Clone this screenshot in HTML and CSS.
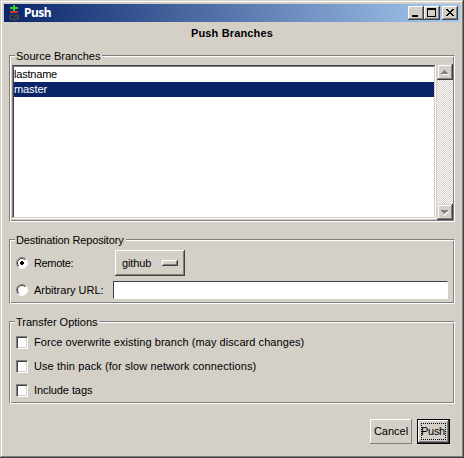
FILE: index.html
```html
<!DOCTYPE html>
<html lang="en">
<head>
<meta charset="utf-8">
<title>Push</title>
<link rel="stylesheet" href="styles.css">
</head>
<body>
<main class="window">
  <header class="titlebar">
    <svg class="app-icon" width="12" height="18" viewBox="0 0 12 18">
      <path fill="#3c3" d="M5 1h2v2h3v2H7v2H5V5H2V3h3z"/>
      <path fill="#c33" d="M2 7h8v2H2z"/>
      <path fill="none" stroke="#444" stroke-width="2" d="M5 11H3.500Q2 11 2 13t1.500 2.500h4.500Q10 15.500 10 13.500V11.500H7V13.500"/>
    </svg>
    <h1 class="title">Push</h1>
    <button class="caption" aria-label="Minimize"><svg width="12" height="10" shape-rendering="crispEdges"><path d="M2 7h6v2H2z"/></svg></button>
    <button class="caption" aria-label="Maximize"><svg width="12" height="10" shape-rendering="crispEdges"><path fill-rule="evenodd" d="M1 0h9v9H1zM2 2v6h7V2z"/></svg></button>
    <button class="caption close" aria-label="Close"><svg width="12" height="10" shape-rendering="crispEdges"><path d="M2 1h2v1h1v1h2V2h1V1h2v1H9v1H8v1H7v1h1v1h1v1h1v1H8V7H7V6H5v1H4v1H2V7h1V6h1V5h1V4H4V3H3V2H2z"/></svg></button>
  </header>
  <h2 class="heading">Push Branches</h2>

  <section class="group branches">
    <h3 class="legend"><span class="t-source">Source Branches</span></h3>
    <div class="list-row">
      <ul class="listbox">
        <li>lastname</li>
        <li class="selected">master</li>
      </ul>
      <div class="scrollbar">
        <div class="arrow"><svg width="12" height="12" shape-rendering="crispEdges"><path fill="#fff" d="M3 8h7v1H3z"/><path fill="#808080" d="M5 4h1v1h1v1h1v1h1v1H2V7h1V6h1V5h1z"/></svg></div>
        <div class="track"></div>
        <div class="arrow"><svg width="12" height="12" shape-rendering="crispEdges"><path fill="#fff" d="M9 5h1v1H9v1H8v1H7v1H6v1H5V8h1V7h1V6h2z"/><path fill="#808080" d="M2 4h7v1H8v1H7v1H6v1H5V7H4V6H3V5H2z"/></svg></div>
      </div>
    </div>
  </section>

  <section class="group destination">
    <h3 class="legend"><span class="t-dest">Destination Repository</span></h3>
    <div class="row remote">
      <svg class="radio" width="12" height="12" viewBox="0 0 12 12"><circle cx="6" cy="6" r="5" fill="#fff"/><path class="r-dark" d="M2.100 9.900A5.500 5.500 0 0 1 9.900 2.100"/><path class="r-inner" d="M2.800 9.200A4.500 4.500 0 0 1 9.200 2.800"/><path class="r-light" d="M9.900 2.100A5.500 5.500 0 0 1 2.100 9.900"/><path d="M5 4h2v1h1v2H7v1H5V7H4V5h1z"/></svg>
      <span class="label t-remote">Remote:</span>
      <button class="menu"><span class="t-github">github</span><i class="indicator"></i></button>
    </div>
    <div class="row url">
      <svg class="radio" width="12" height="12" viewBox="0 0 12 12"><circle cx="6" cy="6" r="5" fill="#fff"/><path class="r-dark" d="M2.100 9.900A5.500 5.500 0 0 1 9.900 2.100"/><path class="r-inner" d="M2.800 9.200A4.500 4.500 0 0 1 9.200 2.800"/><path class="r-light" d="M9.900 2.100A5.500 5.500 0 0 1 2.100 9.900"/></svg>
      <span class="label t-url">Arbitrary URL:</span>
      <input class="entry" type="text" aria-label="Arbitrary URL">
    </div>
  </section>

  <section class="group options">
    <h3 class="legend"><span class="t-transfer">Transfer Options</span></h3>
    <div class="row check"><i class="box"></i><span class="label t-force">Force overwrite existing branch (may discard changes)</span></div>
    <div class="row check"><i class="box"></i><span class="label t-thin">Use thin pack (for slow network connections)</span></div>
    <div class="row check"><i class="box"></i><span class="label t-tags">Include tags</span></div>
  </section>

  <footer class="actions">
    <button class="btn cancel">Cancel</button>
    <button class="btn push"><span class="focus">Push</span></button>
  </footer>
</main>
</body>
</html>
```
FILE: styles.css
```css
* { box-sizing: border-box; margin: 0; padding: 0; }
body {
  width: 464px; height: 458px; overflow: hidden;
  background: #d4d0c8; color: #000;
  font: 11px/15px "Liberation Sans", Arial, sans-serif;
}
button { font: inherit; color: inherit; border: 0; background: #d4d0c8; }
svg { display: block; }
.window {
  width: 464px; height: 458px; padding: 4px;
  box-shadow: inset -1px -1px #404040, inset 1px 1px #d4d0c8, inset -2px -2px #808080, inset 2px 2px #fff;
}
.titlebar {
  display: flex; align-items: center; height: 18px; padding: 0 2px 0 4px;
  background: linear-gradient(90deg, #0a246a, #a6caf0);
}
.title {
  flex: 1; padding-left: 4px; color: #fff;
  font: bold 12px/18px "Noto Sans", sans-serif; letter-spacing: -0.5px;
}
.caption {
  width: 16px; height: 14px; padding: 2px;
  box-shadow: inset -1px -1px #404040, inset 1px 1px #fff, inset -2px -2px #808080;
}
.close { margin-left: 2px; }
.heading { height: 33px; padding-top: 4px; text-align: center; font-size: 11px; line-height: 15px; letter-spacing: 0.15px; }
.group {
  width: 446px; margin-left: 5px; padding: 1px 2px;
  border: 1px solid #808080; border-right-color: #fff; border-bottom-color: #fff;
  box-shadow: inset 1px 1px #fff, inset -1px -1px #808080;
}
.legend { height: 15px; margin-top: -8px; padding-left: 3px; font-size: 11px; font-weight: normal; line-height: 15px; }
.legend span { display: inline-block; padding: 0 2px 0 1px; background: #d4d0c8; white-space: nowrap; }
.t-dest { letter-spacing: -0.14px; }
.branches { height: 167px; }
.list-row { display: flex; justify-content: space-between; margin-right: -1px; }
.listbox {
  width: 424px; height: 154px; margin-top: 1px; padding: 2px; list-style: none; background: #fff;
  box-shadow: inset -1px -1px #fff, inset 0 1px #404040, inset 1px 0 #808080, inset -2px -2px #d4d0c8, inset 0 2px #808080, inset 2px 0 #404040;
}
.listbox li { height: 15px; letter-spacing: -0.2px; }
.listbox .selected { background: #0a246a; color: #fff; letter-spacing: -0.1px; }
.scrollbar { display: flex; flex-direction: column; width: 16px; height: 156px; }
.arrow {
  height: 16px; padding: 2px; background: #d4d0c8;
  box-shadow: inset -1px -1px #404040, inset 1px 1px #d4d0c8, inset -2px -2px #808080, inset 2px 2px #fff;
}
.track { flex: 1; background: repeating-conic-gradient(#fff 0 25%, #d4d0c8 0 50%) 0 0 / 2px 2px; }
.destination { height: 65px; margin-top: 17px; }
.row { display: flex; align-items: center; padding-left: 4px; }
.label { margin-left: 6px; white-space: nowrap; }
.t-remote { letter-spacing: -0.35px; }
.t-github { letter-spacing: -0.1px; }
.t-force { letter-spacing: 0.06px; }
.t-thin { letter-spacing: 0.09px; }
.t-tags { letter-spacing: -0.08px; }
.remote { height: 26px; margin-top: 2px; }
.radio path { fill: #000; }
.radio .r-dark { fill: none; stroke: #808080; }
.radio .r-inner { fill: none; stroke: #404040; }
.radio .r-light { fill: none; stroke: #fff; }
.menu {
  display: flex; align-items: center; width: 70px; height: 26px; margin-left: auto; margin-right: 267px; padding: 0 7px;
  box-shadow: inset -1px -1px #404040, inset 1px 1px #fff, inset -2px -2px #808080;
}
.indicator {
  width: 16px; height: 6px; margin-left: auto;
  box-shadow: inset -1px -1px #404040, inset 1px 1px #fff, inset -2px -2px #808080;
}
.url { height: 18px; margin-top: 5px; }
.entry {
  width: 335px; height: 18px; margin-left: auto; margin-right: 4px; background: #fff;
  border: 1px solid #fff; border-top-color: #404040; border-left-color: #404040; outline: 0;
}
.options { height: 83px; margin-top: 17px; }
.check { height: 24px; }
.box {
  width: 12px; height: 13px; background: #fff;
  border: 1px solid #808080; border-right-color: #fff; border-bottom-color: #fff;
  box-shadow: inset 1px 1px #404040, inset -1px -1px #d4d0c8;
}
.actions { display: flex; justify-content: flex-end; gap: 5px; margin: 15px 10px 0 0; }
.btn { height: 25px; text-align: center; }
.cancel { width: 42px; box-shadow: inset -1px -1px #808080, inset 1px 1px #fff; }
.push {
  width: 33px; padding: 3px; border: 1px solid #000;
  box-shadow: inset -1px -1px #404040, inset 1px 1px #fff, inset -2px -2px #808080;
}
.focus { display: block; height: 17px; border: 1px dotted #000; line-height: 15px; letter-spacing: -0.3px; text-indent: -1px; }
```
